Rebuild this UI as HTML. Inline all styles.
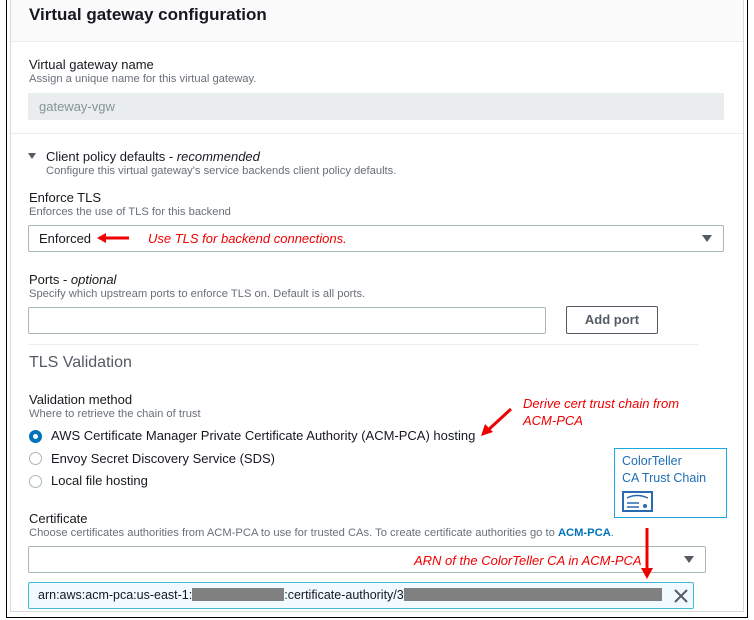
<!DOCTYPE html>
<html><head><meta charset="utf-8"><style>
*{box-sizing:border-box;margin:0;padding:0}
body{width:754px;height:620px;background:#fff;font-family:"Liberation Sans",Arial,sans-serif;color:#16191f;position:relative;overflow:hidden}
.a{position:absolute;white-space:nowrap}
.lbl{font-size:13px;color:#16191f}
.desc{font-size:11.2px;color:#687078}
.inp{position:absolute;border:1px solid #aab7b8;border-radius:2px;background:#fff}
.red{color:#e00;font-style:italic;font-size:13px}
.tri{position:absolute;width:0;height:0;border-left:5px solid transparent;border-right:5px solid transparent;border-top:7px solid #545b64}
.radio{position:absolute;width:13px;height:13px;border-radius:50%;border:1px solid #aab7b8;background:#fff}
</style></head><body>
<div class="a" style="left:6px;top:-2px;width:742px;height:620px;border:1.5px solid #000"></div>
<div class="a" style="left:10px;top:0;width:734px;height:612px;border-left:1px solid #d5dbdb;border-right:1px solid #d5dbdb;border-bottom:1px solid #d5dbdb"></div>
<div class="a" style="left:11px;top:0;width:732px;height:42px;background:#fafafa;border-bottom:1px solid #eaeded"></div>
<div class="a" style="left:29px;top:5px;font-size:17px;font-weight:bold">Virtual gateway configuration</div>

<div class="a lbl" style="left:29px;top:57px">Virtual gateway name</div>
<div class="a desc" style="left:29px;top:73px">Assign a unique name for this virtual gateway.</div>
<div class="a" style="left:28px;top:93px;width:696px;height:27px;background:#eaeded;border-radius:2px"></div>
<div class="a" style="left:39px;top:99px;font-size:13px;color:#879596">gateway-vgw</div>
<div class="a" style="left:11px;top:133px;width:732px;height:1px;background:#eaeded"></div>

<div class="tri" style="left:28px;top:153px;border-left-width:4.5px;border-right-width:4.5px;border-top-width:6px"></div>
<div class="a lbl" style="left:46px;top:149px">Client policy defaults - <i>recommended</i></div>
<div class="a desc" style="left:46px;top:165px">Configure this virtual gateway's service backends client policy defaults.</div>

<div class="a lbl" style="left:29px;top:190px">Enforce TLS</div>
<div class="a desc" style="left:29px;top:206px">Enforces the use of TLS for this backend</div>
<div class="inp" style="left:28px;top:225px;width:696px;height:27px"></div>
<div class="a lbl" style="left:39px;top:231px">Enforced</div>
<svg class="a" style="left:97px;top:232px" width="34" height="12"><path d="M2 6H32" stroke="#e00" stroke-width="3"/><path d="M0 6L9 1V11Z" fill="#e00"/></svg>
<div class="a red" style="left:148px;top:231px">Use TLS for backend connections.</div>
<div class="tri" style="left:702px;top:235px"></div>

<div class="a lbl" style="left:29px;top:272px">Ports - <i>optional</i></div>
<div class="a desc" style="left:29px;top:288px">Specify which upstream ports to enforce TLS on. Default is all ports.</div>
<div class="inp" style="left:28px;top:307px;width:518px;height:27px"></div>
<div class="a" style="left:566px;top:306px;width:92px;height:28px;border:1px solid #545b64;border-radius:2px;font-size:13px;font-weight:bold;color:#545b64;text-align:center;line-height:26px">Add port</div>
<div class="a" style="left:28px;top:344px;width:670px;height:1px;background:#eaeded"></div>

<div class="a" style="left:29px;top:354px;font-size:16px;color:#545b64">TLS Validation</div>

<div class="a lbl" style="left:29px;top:392px">Validation method</div>
<div class="a desc" style="left:29px;top:408px">Where to retrieve the chain of trust</div>
<div class="radio" style="left:29px;top:430px;border:4px solid #0073bb"></div>
<div class="a lbl" style="left:51px;top:428px">AWS Certificate Manager Private Certificate Authority (ACM-PCA) hosting</div>
<div class="radio" style="left:29px;top:452px"></div>
<div class="a lbl" style="left:51px;top:451px">Envoy Secret Discovery Service (SDS)</div>
<div class="radio" style="left:29px;top:475px"></div>
<div class="a lbl" style="left:51px;top:473px">Local file hosting</div>
<svg class="a" style="left:480px;top:407px" width="34" height="30"><path d="M31 2L6 25" stroke="#e00" stroke-width="3"/><path d="M1 29L5 17L13 25Z" fill="#e00"/></svg>
<div class="a red" style="left:523px;top:395px;line-height:17px">Derive cert trust chain from<br>ACM-PCA</div>

<div class="a" style="left:614px;top:448px;width:113px;height:70px;border:1px solid #1ba7e0"></div>
<div class="a" style="left:622px;top:453px;font-size:12.5px;color:#1f6eb5;line-height:17px">ColorTeller<br>CA Trust Chain</div>
<svg class="a" style="left:622px;top:491px" width="32" height="22"><rect x="1" y="1" width="29" height="19" fill="none" stroke="#2a6ab0" stroke-width="2"/><path d="M5 7Q15 2 26 7" fill="none" stroke="#2a6ab0" stroke-width="1.5"/><path d="M5 12H17M5 16H17" stroke="#2a6ab0" stroke-width="1.5"/><circle cx="23" cy="15" r="2" fill="#2a6ab0"/></svg>

<div class="a lbl" style="left:29px;top:511px">Certificate</div>
<div class="a desc" style="left:29px;top:527px">Choose certificates authorities from ACM-PCA to use for trusted CAs. To create certificate authorities go to <b style="color:#0073bb">ACM-PCA</b>.</div>
<div class="inp" style="left:28px;top:546px;width:678px;height:27px"></div>
<div class="tri" style="left:684px;top:556px"></div>
<div class="a red" style="left:414px;top:553px">ARN of the ColorTeller CA in ACM-PCA</div>
<svg class="a" style="left:640px;top:528px" width="14" height="52"><path d="M7 0V42" stroke="#e00" stroke-width="3"/><path d="M1 40H13L7 51Z" fill="#e00"/></svg>

<div class="a" style="left:28px;top:582px;width:666px;height:27px;border:1px solid #44b9d6;background:#f1faff;border-radius:2px"></div>
<div class="a" style="left:38px;top:588px;font-size:12.5px;color:#16191f">arn:aws:acm-pca:us-east-1:<span style="display:inline-block;width:92px;height:13px;background:#808080;vertical-align:-2px"></span>:certificate-authority/3<span style="display:inline-block;width:258px;height:13px;background:#808080;vertical-align:-2px"></span></div>
<svg class="a" style="left:674px;top:589px" width="14" height="14"><path d="M1 1L13 13M13 1L1 13" stroke="#545b64" stroke-width="2"/></svg>
</body></html>
